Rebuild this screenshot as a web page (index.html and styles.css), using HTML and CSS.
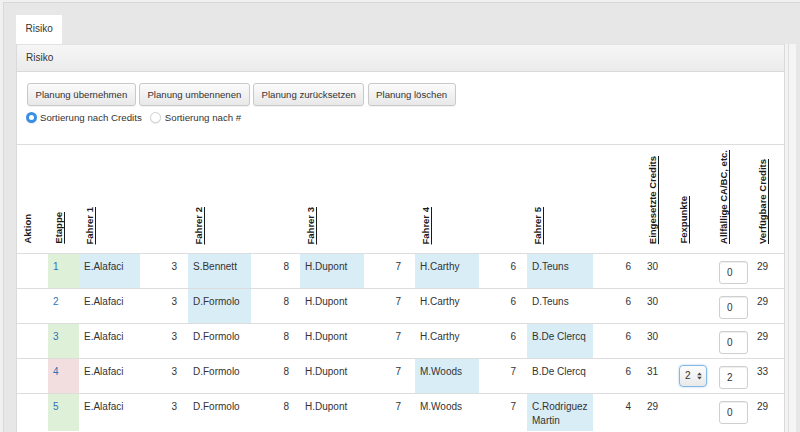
FILE: index.html
```html
<!DOCTYPE html>
<html lang="de">
<head>
<meta charset="utf-8">
<title>Risiko</title>
<link rel="stylesheet" href="styles.css">
</head>
<body>
<div class="frame">
  <div class="tabs"><div class="tab">Risiko</div></div>
  <div class="main">
    <div class="panel">
      <div class="panel-head">Risiko</div>
      <div class="panel-body">
        <div class="toolbar">
          <div class="btns">
            <button class="btn">Planung übernehmen</button>
            <button class="btn">Planung umbennenen</button>
            <button class="btn">Planung zurücksetzen</button>
            <button class="btn">Planung löschen</button>
          </div>
          <div class="radios">
            <label class="opt"><span class="radio on"></span>Sortierung nach Credits</label>
            <label class="opt second"><span class="radio"></span>Sortierung nach #</label>
          </div>
        </div>
        <table class="grid">
          <colgroup>
            <col class="w31"><col class="w31"><col class="w61"><col class="w48"><col class="w63"><col class="w49"><col class="w64"><col class="w51"><col class="w64"><col class="w48"><col class="w66"><col class="w49"><col class="w31"><col class="w40"><col class="w39"><col class="w32">
          </colgroup>
          <thead>
            <tr>
              <th><div class="hw"><span class="vt plain">Aktion</span></div></th>
              <th><div class="hw"><span class="vt">Etappe</span></div></th>
              <th><div class="hw"><span class="vt">Fahrer 1</span></div></th>
              <th></th>
              <th><div class="hw"><span class="vt">Fahrer 2</span></div></th>
              <th></th>
              <th><div class="hw"><span class="vt">Fahrer 3</span></div></th>
              <th></th>
              <th><div class="hw"><span class="vt">Fahrer 4</span></div></th>
              <th></th>
              <th><div class="hw"><span class="vt">Fahrer 5</span></div></th>
              <th></th>
              <th><div class="hw"><span class="vt">Eingesetzte Credits</span></div></th>
              <th><div class="hw"><span class="vt">Fexpunkte</span></div></th>
              <th><div class="hw"><span class="vt">Allfällige CA/BC, etc.</span></div></th>
              <th><div class="hw"><span class="vt">Verfügbare Credits</span></div></th>
            </tr>
          </thead>
          <tbody>
            <tr>
              <td></td>
              <td class="ok"><a class="lnk">1</a></td>
              <td class="sel">E.Alafaci</td><td class="pt">3</td>
              <td class="sel">S.Bennett</td><td class="pt">8</td>
              <td class="sel">H.Dupont</td><td class="pt p3">7</td>
              <td class="sel">H.Carthy</td><td class="pt">6</td>
              <td class="sel">D.Teuns</td><td class="pt">6</td>
              <td>30</td>
              <td></td>
              <td class="ic"><span class="inp">0</span></td>
              <td>29</td>
            </tr>
            <tr>
              <td></td>
              <td><a class="lnk">2</a></td>
              <td>E.Alafaci</td><td class="pt">3</td>
              <td class="sel">D.Formolo</td><td class="pt">8</td>
              <td>H.Dupont</td><td class="pt p3">7</td>
              <td>H.Carthy</td><td class="pt">6</td>
              <td>D.Teuns</td><td class="pt">6</td>
              <td>30</td>
              <td></td>
              <td class="ic"><span class="inp">0</span></td>
              <td>29</td>
            </tr>
            <tr>
              <td></td>
              <td class="ok"><a class="lnk">3</a></td>
              <td>E.Alafaci</td><td class="pt">3</td>
              <td>D.Formolo</td><td class="pt">8</td>
              <td>H.Dupont</td><td class="pt p3">7</td>
              <td>H.Carthy</td><td class="pt">6</td>
              <td class="sel">B.De Clercq</td><td class="pt">6</td>
              <td>30</td>
              <td></td>
              <td class="ic"><span class="inp">0</span></td>
              <td>29</td>
            </tr>
            <tr>
              <td></td>
              <td class="bad"><a class="lnk">4</a></td>
              <td>E.Alafaci</td><td class="pt">3</td>
              <td>D.Formolo</td><td class="pt">8</td>
              <td>H.Dupont</td><td class="pt p3">7</td>
              <td class="sel">M.Woods</td><td class="pt">7</td>
              <td>B.De Clercq</td><td class="pt">6</td>
              <td>31</td>
              <td class="sc"><span class="select">2<svg class="arr" width="5" height="8" viewBox="0 0 5 8"><path d="M2.5 0.5L4.8 3.3H0.2Z M2.5 7.5L4.8 4.7H0.2Z" fill="#444"/></svg></span></td>
              <td class="ic"><span class="inp">2</span></td>
              <td>33</td>
            </tr>
            <tr>
              <td></td>
              <td class="ok"><a class="lnk">5</a></td>
              <td>E.Alafaci</td><td class="pt">3</td>
              <td>D.Formolo</td><td class="pt">8</td>
              <td>H.Dupont</td><td class="pt p3">7</td>
              <td>M.Woods</td><td class="pt">7</td>
              <td class="sel">C.Rodriguez Martin</td><td class="pt">4</td>
              <td>29</td>
              <td></td>
              <td class="ic"><span class="inp">0</span></td>
              <td>29</td>
            </tr>
          </tbody>
        </table>
      </div>
    </div>
    <div class="track"></div>
  </div>
</div>
</body>
</html>
```
FILE: styles.css
```css
html, body {
  margin: 0;
  height: 100%;
}
body {
  background: #f0f0f0;
  font-family: "Liberation Sans", Arial, Helvetica, sans-serif;
  color: #333;
  overflow: hidden;
}
.frame {
  margin: 2px 0 0 3px;
  border-top: 1px solid #d8d8d8;
  border-left: 1px solid #d8d8d8;
  background: #e7e7e7;
  min-height: 440px;
}
.tabs {
  display: flex;
  padding: 12px 0 0 12px;
}
.tab {
  background: #fff;
  font-size: 10px;
  line-height: 27px;
  height: 29px;
  box-sizing: border-box;
  padding: 0 9.5px 2px;
}
.main {
  display: flex;
  padding-left: 12px;
}
.panel {
  width: 769px;
  box-sizing: border-box;
  border-left: 1px solid #dadada;
  border-right: 1px solid #dadada;
  background: #fff;
  min-height: 400px;
}
.panel-head {
  height: 28px;
  box-sizing: border-box;
  border-top: 1px solid #e2e2e2;
  border-bottom: 1px solid #d9d9d9;
  background: linear-gradient(#f6f6f6, #ebebeb);
  font-size: 10px;
  line-height: 26px;
  padding-left: 9px;
}
.track {
  width: 12px;
  background: linear-gradient(90deg, #f3f3f3 0, #f3f3f3 3px, #dedede 3px, #dedede 4px, #f5f5f5 4px, #f5f5f5 11px, #e7e7e7 11px);
}
.toolbar {
  padding: 11px 10px 0;
}
.btns {
  display: flex;
  gap: 3.2px;
}
.btn {
  height: 23px;
  box-sizing: border-box;
  border: 1px solid #c9c9c9;
  border-radius: 3px;
  background: linear-gradient(#fbfbfb, #e8e8e8);
  box-shadow: 0 1px 1px rgba(0, 0, 0, 0.06);
  padding: 0 7.5px;
  font-family: inherit;
  font-size: 9.6px;
  color: #333;
  line-height: 21px;
  margin: 0;
}
.radios {
  display: flex;
  align-items: center;
  height: 14px;
  margin-top: 4px;
  font-size: 9.7px;
}
.opt {
  display: flex;
  align-items: center;
}
.opt:first-child {
  margin-left: -1px;
}
.second {
  margin-left: 8px;
}
.radio {
  width: 11px;
  height: 11px;
  box-sizing: border-box;
  border-radius: 50%;
  border: 1px solid #d0d0d0;
  background: #fff;
  box-shadow: 0 1px 1px rgba(0, 0, 0, 0.08);
  margin-right: 4px;
}
.radio.on {
  border: 3px solid #3b8fe3;
  background: #fff;
  margin-right: 3px;
}
.grid {
  margin-top: 20px;
  width: 767px;
  table-layout: fixed;
  border-collapse: collapse;
  font-size: 10px;
}
.w31 { width: 31px; }
.w32 { width: 32px; }
.w39 { width: 39px; }
.w40 { width: 40px; }
.w48 { width: 48px; }
.w49 { width: 49px; }
.w51 { width: 51px; }
.w61 { width: 61px; }
.w63 { width: 63px; }
.w64 { width: 64px; }
.w66 { width: 66px; }
.grid th {
  border-top: 1px solid #ddd;
  border-bottom: 1px solid #ddd;
  padding: 0 5px;
  vertical-align: bottom;
  text-align: left;
  height: 108px;
}
.hw {
  display: flex;
  align-items: flex-end;
  padding-bottom: 9px;
}
.vt {
  writing-mode: vertical-rl;
  transform: rotate(180deg);
  font-size: 9.5px;
  font-weight: bold;
  line-height: 11px;
  color: #1a1a1a;
  text-decoration: underline;
  white-space: nowrap;
}
.vt.plain {
  text-decoration: none;
}
.grid td {
  border-top: 1px solid #ddd;
  padding: 6px 3px 4px 5px;
  line-height: 13.5px;
  vertical-align: top;
}
.grid td.pt {
  text-align: right;
  padding-right: 11px;
}
.grid td.p3 {
  padding-right: 14px;
}
.grid td.ok { background: #dff0d8; }
.grid td.bad { background: #f2dede; }
.grid td.sel { background: #d9edf7; }
.lnk {
  color: #2f72b3;
}
.grid td.ic {
  padding-left: 6px;
}
.inp {
  display: block;
  width: 29px;
  height: 23px;
  box-sizing: border-box;
  margin-top: 1px;
  border: 1px solid #cfcfcf;
  border-radius: 3px;
  box-shadow: inset 0 1px 1px rgba(0, 0, 0, 0.07);
  padding-left: 7px;
  line-height: 21px;
  background: #fff;
}
.grid td.sc {
  padding-left: 6px;
}
.select {
  display: flex;
  align-items: center;
  justify-content: space-between;
  width: 28px;
  height: 22px;
  box-sizing: border-box;
  border: 1px solid #86b7e6;
  border-radius: 4px;
  box-shadow: 0 0 2px rgba(102, 175, 233, 0.7);
  background: linear-gradient(#fdfdfd, #e9e9e9);
  padding: 0 4px 0 5px;
  font-size: 10px;
}
.arr {
  display: block;
}
```
